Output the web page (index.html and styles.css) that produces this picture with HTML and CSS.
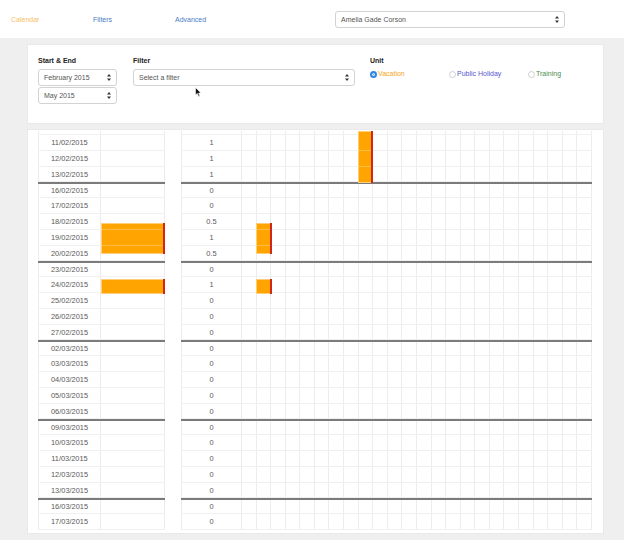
FILE: index.html
```html
<!DOCTYPE html>
<html>
<head>
<meta charset="utf-8">
<link rel="stylesheet" href="styles.css">
</head>
<body>
<header class="topbar">
  <nav class="nav">
    <a class="nav-link active">Calendar</a>
    <a class="nav-link">Filters</a>
    <a class="nav-link">Advanced</a>
  </nav>
  <div class="select select-user">
    <span>Amelia Gade Corson</span>
    <svg class="caret" width="4" height="7" viewBox="0 0 4 7"><path d="M2 0L4 2.6H0Z M2 7L4 4.4H0Z" fill="#333"/></svg>
  </div>
</header>

<section class="panel controls">
  <div class="field field-range">
    <div class="label">Start &amp; End</div>
    <div class="select"><span>February 2015</span><svg class="caret" width="4" height="7" viewBox="0 0 4 7"><path d="M2 0L4 2.6H0Z M2 7L4 4.4H0Z" fill="#333"/></svg></div>
    <div class="select"><span>May 2015</span><svg class="caret" width="4" height="7" viewBox="0 0 4 7"><path d="M2 0L4 2.6H0Z M2 7L4 4.4H0Z" fill="#333"/></svg></div>
  </div>
  <div class="field field-filter">
    <div class="label">Filter</div>
    <div class="select"><span>Select a filter</span><svg class="caret" width="4" height="7" viewBox="0 0 4 7"><path d="M2 0L4 2.6H0Z M2 7L4 4.4H0Z" fill="#333"/></svg></div>
  </div>
  <div class="field field-unit">
    <div class="label">Unit</div>
    <div class="radios">
      <label class="radio vacation"><span class="dot checked"></span>Vacation</label>
      <label class="radio holiday"><span class="dot"></span>Public Holiday</label>
      <label class="radio training"><span class="dot"></span>Training</label>
    </div>
  </div>
</section>

<section class="panel sheet">
  <div class="table left">
    <div class="row partial"><span class="c-date"></span><span class="c-bar"></span></div>
    <div class="row"><span class="c-date">11/02/2015</span><span class="c-bar"></span></div>
    <div class="row"><span class="c-date">12/02/2015</span><span class="c-bar"></span></div>
    <div class="row"><span class="c-date">13/02/2015</span><span class="c-bar"></span></div>
    <div class="row week"><span class="c-date">16/02/2015</span><span class="c-bar"></span></div>
    <div class="row"><span class="c-date">17/02/2015</span><span class="c-bar"></span></div>
    <div class="row"><span class="c-date">18/02/2015</span><span class="c-bar"></span></div>
    <div class="row"><span class="c-date">19/02/2015</span><span class="c-bar"></span></div>
    <div class="row"><span class="c-date">20/02/2015</span><span class="c-bar"></span></div>
    <div class="row week"><span class="c-date">23/02/2015</span><span class="c-bar"></span></div>
    <div class="row"><span class="c-date">24/02/2015</span><span class="c-bar"></span></div>
    <div class="row"><span class="c-date">25/02/2015</span><span class="c-bar"></span></div>
    <div class="row"><span class="c-date">26/02/2015</span><span class="c-bar"></span></div>
    <div class="row"><span class="c-date">27/02/2015</span><span class="c-bar"></span></div>
    <div class="row week"><span class="c-date">02/03/2015</span><span class="c-bar"></span></div>
    <div class="row"><span class="c-date">03/03/2015</span><span class="c-bar"></span></div>
    <div class="row"><span class="c-date">04/03/2015</span><span class="c-bar"></span></div>
    <div class="row"><span class="c-date">05/03/2015</span><span class="c-bar"></span></div>
    <div class="row"><span class="c-date">06/03/2015</span><span class="c-bar"></span></div>
    <div class="row week"><span class="c-date">09/03/2015</span><span class="c-bar"></span></div>
    <div class="row"><span class="c-date">10/03/2015</span><span class="c-bar"></span></div>
    <div class="row"><span class="c-date">11/03/2015</span><span class="c-bar"></span></div>
    <div class="row"><span class="c-date">12/03/2015</span><span class="c-bar"></span></div>
    <div class="row"><span class="c-date">13/03/2015</span><span class="c-bar"></span></div>
    <div class="row week"><span class="c-date">16/03/2015</span><span class="c-bar"></span></div>
    <div class="row last"><span class="c-date">17/03/2015</span><span class="c-bar"></span></div>
    <div class="bar" style="left:63px;width:64px;top:91.8px;height:31px"></div>
    <div class="bar single" style="left:63px;width:64px;top:148px;height:15px"></div>
  </div>

  <div class="table right">
    <div class="row partial"><span class="c-count"></span><span class="c-slots"></span></div>
    <div class="row"><span class="c-count">1</span><span class="c-slots"></span></div>
    <div class="row"><span class="c-count">1</span><span class="c-slots"></span></div>
    <div class="row"><span class="c-count">1</span><span class="c-slots"></span></div>
    <div class="row week"><span class="c-count">0</span><span class="c-slots"></span></div>
    <div class="row"><span class="c-count">0</span><span class="c-slots"></span></div>
    <div class="row"><span class="c-count">0.5</span><span class="c-slots"></span></div>
    <div class="row"><span class="c-count">1</span><span class="c-slots"></span></div>
    <div class="row"><span class="c-count">0.5</span><span class="c-slots"></span></div>
    <div class="row week"><span class="c-count">0</span><span class="c-slots"></span></div>
    <div class="row"><span class="c-count">1</span><span class="c-slots"></span></div>
    <div class="row"><span class="c-count">0</span><span class="c-slots"></span></div>
    <div class="row"><span class="c-count">0</span><span class="c-slots"></span></div>
    <div class="row"><span class="c-count">0</span><span class="c-slots"></span></div>
    <div class="row week"><span class="c-count">0</span><span class="c-slots"></span></div>
    <div class="row"><span class="c-count">0</span><span class="c-slots"></span></div>
    <div class="row"><span class="c-count">0</span><span class="c-slots"></span></div>
    <div class="row"><span class="c-count">0</span><span class="c-slots"></span></div>
    <div class="row"><span class="c-count">0</span><span class="c-slots"></span></div>
    <div class="row week"><span class="c-count">0</span><span class="c-slots"></span></div>
    <div class="row"><span class="c-count">0</span><span class="c-slots"></span></div>
    <div class="row"><span class="c-count">0</span><span class="c-slots"></span></div>
    <div class="row"><span class="c-count">0</span><span class="c-slots"></span></div>
    <div class="row"><span class="c-count">0</span><span class="c-slots"></span></div>
    <div class="row week"><span class="c-count">0</span><span class="c-slots"></span></div>
    <div class="row last"><span class="c-count">0</span><span class="c-slots"></span></div>
    <div class="bar tall" style="left:176.7px;width:15.6px;top:0;height:51.5px"></div>
    <div class="bar" style="left:74.6px;width:16.6px;top:91.8px;height:31px"></div>
    <div class="bar single" style="left:74.6px;width:16.6px;top:148px;height:15px"></div>
  </div>
</section>

<svg class="cursor" width="7" height="10" viewBox="0 0 7 10"><path d="M0.5 0.5V8L2.3 6.4L3.6 9.4L4.8 8.9L3.6 6H6Z" fill="#111" stroke="#fff" stroke-width="0.6"/></svg>
</body>
</html>
```

FILE: styles.css
```css
* { box-sizing: border-box; }

html, body {
  margin: 0;
  padding: 0;
}

body {
  width: 624px;
  height: 540px;
  overflow: hidden;
  background: #efefef;
  font-family: "Liberation Sans", Arial, sans-serif;
  font-size: 7px;
  color: #555;
  position: relative;
}

/* ---------- header ---------- */
.topbar {
  height: 38px;
  background: #fff;
  display: flex;
  align-items: center;
  padding-left: 11px;
}

.nav {
  display: flex;
  flex: none;
}

.nav-link {
  width: 82px;
  color: #4b7dc2;
  font-size: 7px;
  line-height: 9px;
  margin-top: 1px;
}

.nav-link.active {
  color: #f7c066;
}

.select {
  height: 17px;
  border: 1px solid #d2d2d2;
  border-radius: 3px;
  background: #fff;
  display: flex;
  align-items: center;
  justify-content: space-between;
  padding: 0 5px 0 5px;
  color: #555;
  font-size: 7px;
}

.select-user {
  width: 230px;
  flex: none;
  margin-left: 78px;
}

.caret {
  display: block;
  flex: none;
}

/* ---------- panels ---------- */
.panel {
  background: #fff;
  margin-left: 28px;
  width: 575px;
  box-shadow: 0 0 0 1px #e9e9e9;
}

.controls {
  margin-top: 7px;
  height: 78px;
  padding: 12px 10px 0 10px;
  display: flex;
  align-items: flex-start;
}

.field {
  display: flex;
  flex-direction: column;
  flex: none;
}

.label {
  font-weight: bold;
  color: #222;
  font-size: 7px;
  line-height: 8px;
  margin-bottom: 4px;
}

.field-range {
  width: 79px;
}

.field-range .select + .select {
  margin-top: 0.5px;
}

.field-filter {
  width: 221.5px;
  margin-left: 16px;
}

.field-unit {
  margin-left: 15.5px;
}

.radios {
  display: flex;
  margin-top: 1px;
}

.radio {
  width: 79px;
  display: flex;
  align-items: center;
  font-size: 7px;
  line-height: 8px;
}

.radio:last-child {
  width: auto;
}

.dot {
  width: 7px;
  height: 7px;
  border-radius: 50%;
  border: 1px solid #d0d0d0;
  background: #fff;
  margin-right: 1px;
  flex: none;
}

.dot.checked {
  border: 2px solid #2f86e8;
  background: #2f86e8;
  box-shadow: inset 0 0 0 1px #fff;
}

.vacation { color: #f5a623; }
.holiday { color: #5656d0; }
.training { color: #4e8c4e; }

/* ---------- sheet ---------- */
.sheet {
  margin-top: 7px;
  height: 403px;
  padding: 1px 0 0 10px;
  display: flex;
  align-items: flex-start;
  gap: 16px;
}

.table {
  position: relative;
  display: flex;
  flex-direction: column;
  flex: none;
}

.table.left { width: 127px; }
.table.right { width: 411px; }

.row {
  height: 15.8px;
  display: flex;
  border-bottom: 1px solid #f0f0f0;
  font-size: 7.4px;
  color: #595959;
}

.row.partial {
  height: 4.1px;
}

.row.week {
  border-top: 2px solid #7b7b7b;
}

.row > span {
  display: flex;
  align-items: center;
  justify-content: center;
}

.c-date {
  width: 63px;
  border-left: 1px solid #ebebeb;
  border-right: 1px solid #ebebeb;
}

.c-bar {
  flex: 1;
  border-right: 1px solid #ebebeb;
}

.c-count {
  width: 61px;
  border-left: 1px solid #ebebeb;
  border-right: 1px solid #ebebeb;
}

.c-slots {
  flex: 1;
  background-image: repeating-linear-gradient(to right, transparent 0, transparent 13.58px, #ededed 13.58px, #ededed 14.58px);
}

/* bars */
.bar {
  position: absolute;
  background:
    linear-gradient(to bottom,
      transparent 0, transparent 6.3px,
      rgba(255, 205, 110, 0.6) 6.3px, rgba(255, 205, 110, 0.6) 7.3px,
      transparent 7.3px, transparent 22.1px,
      rgba(255, 205, 110, 0.6) 22.1px, rgba(255, 205, 110, 0.6) 23.1px,
      transparent 23.1px),
    #ffa400;
  border-right: 2px solid #d3261a;
  box-shadow: inset 0 1px 0 #ffcf78, inset 0 -1px 0 #ffcf78, inset 1px 0 0 #ffcf78;
}

.bar.single {
  background: #ffa400;
}

.bar.tall {
  background:
    linear-gradient(to bottom,
      transparent 0, transparent 19.4px,
      rgba(255, 205, 110, 0.6) 19.4px, rgba(255, 205, 110, 0.6) 20.4px,
      transparent 20.4px, transparent 35.2px,
      rgba(255, 205, 110, 0.6) 35.2px, rgba(255, 205, 110, 0.6) 36.2px,
      transparent 36.2px),
    #ffa400;
}

.cursor {
  position: absolute;
  left: 195px;
  top: 87px;
}
```
